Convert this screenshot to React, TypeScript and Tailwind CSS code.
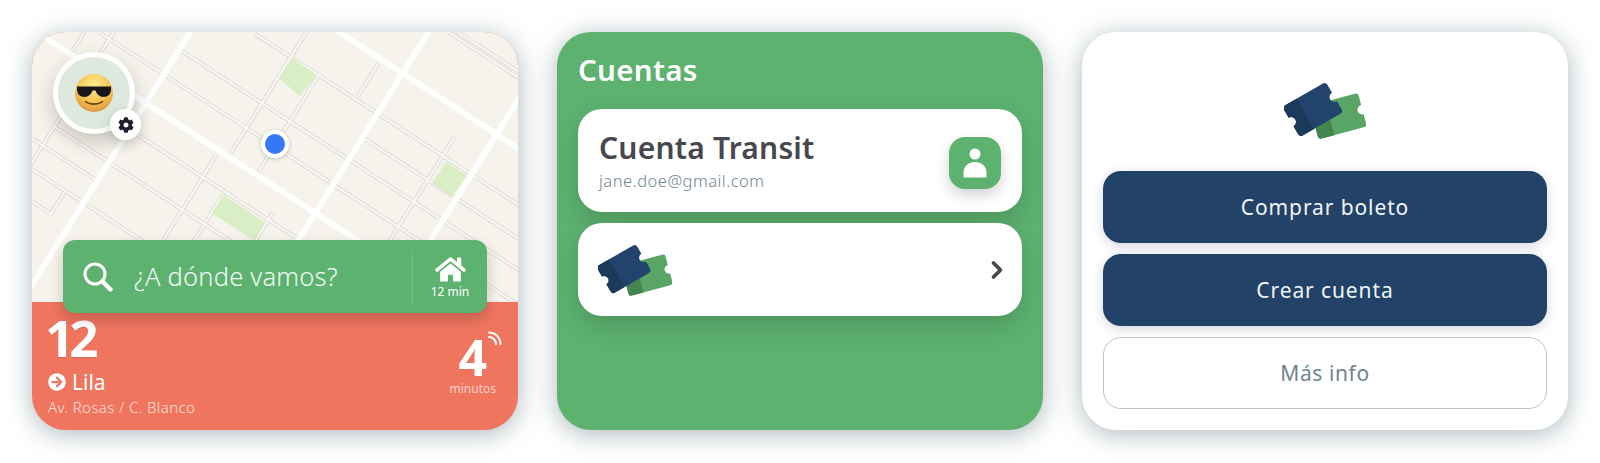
import { ChevronRight } from 'lucide-react';
import { FaArrowCircleRight, FaCog, FaHome } from 'react-icons/fa';

// street lines, in the coordinates of a 1411x784 map drawing (offset 93,96)
const SLOPE_A = 0.65;
const SLOPE_B = 1.6;

const minorA: [number, number, number][] = [
  [528, 93, 150],
  [434, 93, 600],
  [345, 93, 275],
  [268, 150, 800],
  [135, 390, 1100],
  [-90, 290, 1510],
  [-192, 530, 1510],
  [-282, 1060, 1510],
  [-380, 740, 1510],
  [-750, 1300, 1510],
  [-768, 1300, 1510],
];

const minorB: [number, number, number][] = [
  [950, 90, 462],
  [1064, 218, 508],
  [1216, 185, 285],
  [912, 455, 880],
  [1002, 565, 880],
  [305, 90, 165],
  [390, 90, 495],
  [538, 562, 628],
  [1570, 400, 880],
  [1180, 620, 880],
];

const majorA = [27, -544];
const majorB = [612, 1304, 1688];

const parks = [
  '850,170 920,222 870,282 812,232',
  '1295,473 1355,512 1312,575 1255,535',
  '648,568 770,650 740,702 615,622',
];

const lineA = (c: number, x1: number, x2: number) =>
  `M${x1} ${SLOPE_A * x1 + c}L${x2} ${SLOPE_A * x2 + c}`;
const lineB = (d: number, y1: number, y2: number) =>
  `M${d - y1 / SLOPE_B} ${y1}L${d - y2 / SLOPE_B} ${y2}`;

function CityMap() {
  const minors = [
    ...minorA.map(([c, a, b]) => lineA(c, a, b)),
    ...minorB.map(([d, a, b]) => lineB(d, a, b)),
  ];
  const majors = [
    ...majorA.map((c) => lineA(c, 90, 1510)),
    ...majorB.map((d) => lineB(d, 90, 880)),
  ];
  return (
    <svg viewBox="93 96 1411 784" className="block w-[486px] h-[270px] bg-[#f6f3ec]">
      {minors.map((d) => (
        <path key={d} d={d} stroke="#dfdcd5" strokeWidth={12} fill="none" />
      ))}
      {minors.map((d) => (
        <path key={`w${d}`} d={d} stroke="#f9f8f5" strokeWidth={6} fill="none" />
      ))}
      {parks.map((p) => (
        <polygon key={p} points={p} fill="#d9eec5" />
      ))}
      {majors.map((d) => (
        <path key={d} d={d} stroke="#ffffff" strokeWidth={16} fill="none" />
      ))}
    </svg>
  );
}

function CoolFace() {
  return (
    <svg viewBox="0 0 38 38" className="w-[38px] h-[38px]">
      <defs>
        <radialGradient id="face" cx="50%" cy="30%" r="75%">
          <stop offset="0%" stopColor="#fdec8e" />
          <stop offset="55%" stopColor="#f6c655" />
          <stop offset="100%" stopColor="#dc8f3a" />
        </radialGradient>
      </defs>
      <circle cx="19" cy="19" r="19" fill="url(#face)" />
      <path
        d="M2 12.500H36V15C36 20 33 23 28.500 23C24.500 23 21.500 20 20.500 16.500H17.500C16.500 20 13.500 23 9.500 23C5 23 2 20 2 15Z"
        fill="#17171b"
      />
      <path d="M10.500 27.500C14.500 31 23.500 31 27.500 27.500" stroke="#6e4412" strokeWidth={1.6} fill="none" strokeLinecap="round" />
    </svg>
  );
}

const TICKET =
  'M-20 -16H20Q23 -16 23 -13V-4.500A4.500 4.500 0 0 0 23 4.500V13Q23 16 20 16H-20Q-23 16 -23 13V4.500A4.500 4.500 0 0 0 -23 -4.500V-13Q-23 -16 -20 -16Z';
const TICKET_STUB =
  'M-8 -16H-20Q-23 -16 -23 -13V-4.500A4.500 4.500 0 0 1 -23 4.500V13Q-23 16 -20 16H-8Z';

function Tickets({ className }: { className: string }) {
  return (
    <svg viewBox="0 0 80 56" className={className}>
      <g transform="translate(53 33.500) rotate(-15) scale(1.07)">
        <path d={TICKET} fill="#58a566" />
        <path d={TICKET_STUB} fill="#468550" />
      </g>
      <g transform="translate(28 27) rotate(-30) scale(1.07)">
        <path d={TICKET} fill="#22436b" />
        <path d={TICKET_STUB} fill="#1d3a5c" />
      </g>
    </svg>
  );
}

function TransitCard() {
  return (
    <div className="relative w-[486px] h-[398px] rounded-[34px] overflow-hidden flex flex-col shadow-[0_4px_26px_rgba(70,100,110,0.45)] bg-[#f0755f]">
      <CityMap />

      <div className="absolute left-[21px] top-[20px] w-[82px] h-[82px] rounded-full bg-[#dde9df] border-[5px] border-white shadow-[0_8px_20px_rgba(0,0,0,0.2)] flex items-center justify-center">
        <CoolFace />
        <div className="absolute left-[52px] top-[52px] w-[31px] h-[31px] rounded-full bg-white flex items-center justify-center shadow-[0_4px_14px_rgba(0,0,0,0.2)]">
          <FaCog className="text-[16px] text-[#1d1d2b]" />
        </div>
      </div>

      <div className="absolute left-[229px] top-[98px] w-[28px] h-[28px] rounded-full bg-white flex items-center justify-center shadow-[0_1px_5px_rgba(0,0,0,0.2)]">
        <div className="w-[20px] h-[20px] rounded-full bg-[#3478f6]" />
      </div>

      <div className="absolute left-[31px] top-[208px] w-[424px] h-[73px] rounded-[12px] bg-[#5db270] flex items-center shadow-[0_6px_14px_rgba(0,0,0,0.2)] text-white">
        <svg viewBox="0 0 30 30" className="ml-[20px] w-[30px] h-[30px]" fill="none" stroke="#ffffff">
          <circle cx="12" cy="12" r="10" strokeWidth={3} />
          <path d="M19.500 19.500L27.500 27.500" strokeWidth={4.400} strokeLinecap="round" />
        </svg>
        <span className="ml-[21px] flex-1 text-[25.500px] font-light tracking-[0.2px] text-[#f3faf5]">¿A dónde vamos?</span>
        <div className="w-[75px] h-[54px] border-l border-white/15 flex flex-col items-center justify-center">
          <FaHome className="text-[31px] -mb-[1px]" />
          <span className="text-[12px] leading-[15px]">12 min</span>
        </div>
      </div>

      <div className="flex-1 flex justify-between pl-[16px] pr-[22px] text-white">
        <div className="flex flex-col">
          <span className="-ml-[3px] mt-[15px] text-[51px] leading-[40px] font-bold tracking-[-5px] [text-shadow:0_1px_1px_rgba(0,0,0,0.12)]">12</span>
          <div className="mt-[12px] flex items-center gap-[6px] text-[21px] leading-[26px]">
            <FaArrowCircleRight className="text-[18px]" />
            <span>Lila</span>
          </div>
          <span className="mt-[2px] text-[15px] tracking-[0.4px] leading-[20px] font-light text-[#fde3dd]">Av. Rosas / C. Blanco</span>
        </div>
        <div className="mt-[35px] flex flex-col items-center">
          <div className="relative">
            <span className="block text-[50px] leading-[40px] font-bold">4</span>
            <svg viewBox="0 0 14 14" className="absolute -right-[15px] -top-[6px] w-[14px] h-[14px]" fill="none" stroke="#ffffff" strokeWidth={2} strokeLinecap="round">
              <path d="M1 1.500A11.500 11.500 0 0 1 12.500 13" />
              <path d="M1 6A7 7 0 0 1 8 13" />
            </svg>
          </div>
          <span className="mt-[3px] text-[12px] leading-[18px] text-[#fbd0c8]">minutos</span>
        </div>
      </div>
    </div>
  );
}

function AccountsCard() {
  return (
    <div className="w-[486px] h-[398px] rounded-[34px] bg-[#5db270] px-[21px] shadow-[0_4px_26px_rgba(70,100,110,0.45)]">
      <h2 className="pt-[18px] text-[29.500px] tracking-[0.3px] leading-[40px] font-semibold text-white">Cuentas</h2>
      <div className="mt-[19px] h-[103px] rounded-[24px] bg-white flex items-center justify-between pl-[21px] pr-[21px] shadow-[0_10px_26px_rgba(0,0,0,0.16)]">
        <div className="-mt-[1px] flex flex-col">
          <span className="text-[30px] tracking-[0.2px] leading-[40px] font-semibold text-[#47474f]">Cuenta Transit</span>
          <span className="pt-[1px] text-[16.500px] tracking-[0.5px] leading-[24px] font-light text-[#6f858e]">jane.doe@gmail.com</span>
        </div>
        <div className="mt-[5px] w-[52px] h-[52px] rounded-[16px] bg-[#5db270] flex items-center justify-center shadow-[0_6px_14px_rgba(0,0,0,0.18)]">
          <svg viewBox="0 0 24 30" className="w-[24px] h-[30px]" fill="#ffffff">
            <circle cx="12" cy="6" r="5.500" />
            <path d="M0.500 29.500V25C0.500 18 5.500 14 12 14C18.500 14 23.500 18 23.500 25V29.500Z" />
          </svg>
        </div>
      </div>
      <div className="mt-[11px] h-[93px] rounded-[24px] bg-white flex items-center justify-between pl-[20px] pr-[11px] shadow-[0_10px_26px_rgba(0,0,0,0.16)]">
        <Tickets className="w-[74px] h-[52px]" />
        <ChevronRight className="w-[28px] h-[28px] text-[#47474f]" strokeWidth={3.200} />
      </div>
    </div>
  );
}

function WelcomeCard() {
  return (
    <div className="w-[486px] h-[398px] rounded-[34px] bg-white px-[21px] flex flex-col shadow-[0_4px_26px_rgba(70,100,110,0.45)]">
      <div className="h-[139px] flex items-center justify-center">
        <Tickets className="mt-[17px] w-[82px] h-[57px]" />
      </div>
      <button className="h-[72px] pt-[2px] rounded-[18px] bg-[#224268] text-[21px] text-[#f1f5f8] tracking-[0.9px] shadow-[0_3px_12px_rgba(30,50,80,0.2)]">
        Comprar boleto
      </button>
      <button className="mt-[11px] h-[72px] pt-[2px] rounded-[18px] bg-[#224268] text-[21px] text-[#f1f5f8] tracking-[0.9px] shadow-[0_3px_12px_rgba(30,50,80,0.2)]">
        Crear cuenta
      </button>
      <button className="mt-[11px] h-[72px] pt-[2px] rounded-[18px] bg-white border-[1.500px] border-[#bcc3cc] text-[21px] text-[#6f858e] tracking-[0.6px]">
        Más info
      </button>
    </div>
  );
}

export default function App() {
  return (
    <div className="w-[1600px] h-[463px] bg-white overflow-hidden flex gap-[39px] pl-[32px] pt-[32px] [font-family:'Noto_Sans',sans-serif]">
      <TransitCard />
      <AccountsCard />
      <WelcomeCard />
    </div>
  );
}
